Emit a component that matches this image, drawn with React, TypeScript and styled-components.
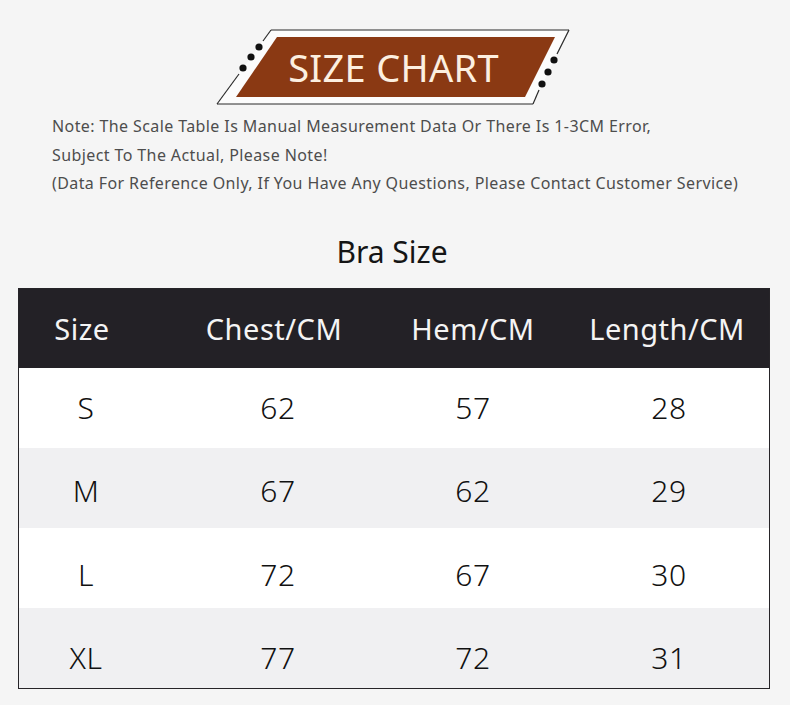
import React from "react";
import styled, { createGlobalStyle } from "styled-components";

const Global = createGlobalStyle`
  html, body { margin: 0; padding: 0; background: #f5f5f5; }
  body { font-family: "Noto Sans", "Open Sans", sans-serif; }
`;

const Page = styled.div`
  width: 790px;
  min-height: 705px;
  background: #f5f5f5;
  display: flex;
  flex-direction: column;
  padding-top: 25px;
  box-sizing: border-box;
`;

const Banner = styled.div`
  display: grid;
  width: 365px;
  height: 85px;
  margin-left: 210px;
  & > * { grid-area: 1 / 1; }
`;

const BannerTitle = styled.div`
  align-self: center;
  justify-self: center;
  margin-left: 2px;
  margin-top: -1px;
  font-family: "Noto Sans", sans-serif;
  font-size: 38px;
  line-height: 1;
  color: #fcefe0;
  letter-spacing: 0.3px;
  white-space: nowrap;
`;

const Notes = styled.div`
  margin-top: 2px;
  padding-left: 52px;
  display: flex;
  flex-direction: column;
`;

const NoteLine = styled.div`
  font-size: 16px;
  line-height: 28.5px;
  letter-spacing: 0.4px;
  color: #4d4d4d;
  white-space: nowrap;
`;

const Title = styled.div`
  margin-top: 34px;
  text-align: center;
  font-size: 30px;
  line-height: 40px;
  color: #151515;
  padding-right: 6px;
`;

const Table = styled.div`
  margin-top: 16px;
  margin-left: 18px;
  width: 752px;
  border: 1px solid #262428;
  box-sizing: border-box;
  display: flex;
  flex-direction: column;
`;

const Row = styled.div<{ $tone: "head" | "white" | "gray"; $nudge?: number }>`
  display: grid;
  grid-template-columns: 134px 250px 140px 1fr;
  height: ${(p) => (p.$tone === "head" ? "79px" : "80px")};
  box-sizing: border-box;
  padding-top: ${(p) => p.$nudge ?? 0}px;
  align-items: center;
  background: ${(p) =>
    p.$tone === "head" ? "#232126" : p.$tone === "white" ? "#ffffff" : "#f0f0f2"};
  color: ${(p) => (p.$tone === "head" ? "#f4f4f4" : "#111111")};
  font-size: ${(p) => (p.$tone === "head" ? "29px" : "30px")};
  font-weight: ${(p) => (p.$tone === "head" ? 400 : 300)};
  & > :nth-child(4) { padding-left: ${(p) => (p.$tone === "head" ? "22px" : "26px")}; }
  & > :nth-child(1),
  & > :nth-child(2) { padding-right: ${(p) => (p.$tone === "head" ? "8px" : "0")}; }
`;

const Cell = styled.div`
  text-align: center;
  white-space: nowrap;
  letter-spacing: 0.5px;
`;

const rows = [
  ["S", "62", "57", "28"],
  ["M", "67", "62", "29"],
  ["L", "72", "67", "30"],
  ["XL", "77", "72", "31"],
];

function BannerShape() {
  const o = (x: number, y: number) => `${x - 210},${y - 25}`;
  return (
    <svg width="365" height="85" viewBox="0 0 365 85">
      <polygon
        points={[o(271, 30), o(569, 30), o(533, 104), o(217, 104)].join(" ")}
        fill="#fcfcfc"
      />
      <polygon
        points={[o(277, 37), o(555, 37), o(525, 97), o(236, 97)].join(" ")}
        fill="#8a3913"
      />
      <g stroke="#2b2b2b" strokeWidth="1.2" fill="none">
        <line x1={61} y1={5} x2={359} y2={5} />
        <line x1={7} y1={79} x2={323} y2={79} />
        <line x1={61} y1={5} x2={53} y2={16} />
        <line x1={29} y1={49} x2={7} y2={79} />
        <line x1={359} y1={5} x2={347} y2={29} />
        <line x1={329} y1={65} x2={323} y2={79} />
      </g>
      <g fill="#111">
        <circle cx={259 - 210} cy={47 - 25} r={3.6} />
        <circle cx={251 - 210} cy={57 - 25} r={3.6} />
        <circle cx={243 - 210} cy={68 - 25} r={3.6} />
        <circle cx={554 - 210} cy={60 - 25} r={3.6} />
        <circle cx={548 - 210} cy={72 - 25} r={3.6} />
        <circle cx={542 - 210} cy={84 - 25} r={3.6} />
      </g>
    </svg>
  );
}

export default function App() {
  return (
    <Page>
      <Global />
      <Banner>
        <BannerShape />
        <BannerTitle>SIZE CHART</BannerTitle>
      </Banner>
      <Notes>
        <NoteLine>Note: The Scale Table Is Manual Measurement Data Or There Is 1-3CM Error,</NoteLine>
        <NoteLine>Subject To The Actual, Please Note!</NoteLine>
        <NoteLine>(Data For Reference Only, If You Have Any Questions, Please Contact Customer Service)</NoteLine>
      </Notes>
      <Title>Bra Size</Title>
      <Table>
        <Row $tone="head">
          <Cell>Size</Cell>
          <Cell>Chest/CM</Cell>
          <Cell>Hem/CM</Cell>
          <Cell>Length/CM</Cell>
        </Row>
        {rows.map((r, i) => (
          <Row key={r[0]} $tone={i % 2 === 0 ? "white" : "gray"} $nudge={i * 6.5}>
            {r.map((c, j) => (
              <Cell key={j}>{c}</Cell>
            ))}
          </Row>
        ))}
      </Table>
    </Page>
  );
}
